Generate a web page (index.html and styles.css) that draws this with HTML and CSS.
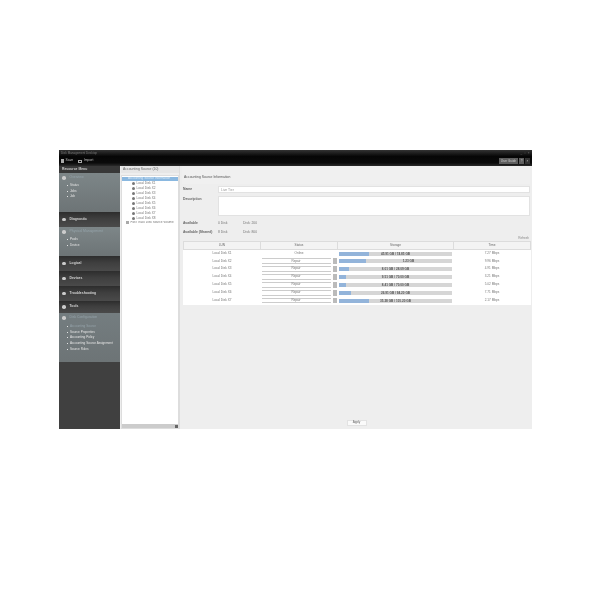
FILE: index.html
```html
<!DOCTYPE html>
<html lang="en">
<head>
<meta charset="utf-8">
<title>Disk Management Desktop</title>
<link rel="stylesheet" href="styles.css">
</head>
<body>
<div class="app">
  <header class="top">
    <div class="titlebar"><span>Disk Management Desktop</span><span class="winctl">_ □ ×</span></div>
    <div class="toolbar">
      <div class="tools"><span class="tool"><i class="ico"></i>Save</span><span class="tool"><i class="ico box"></i>Import</span></div>
      <div class="tools"><span class="tbtn">User Guide</span><span class="tbtn sq">?</span><span class="tbtn sq dark">×</span></div>
    </div>
  </header>
  <div class="body">
    <nav class="side">
      <div class="sidehead">Resource Menu</div>
      <div class="group g1">
        <div class="ghead"><i class="dot"></i><span class="faint">Overview</span></div>
        <ul><li>Status</li><li>Jobs</li><li>Job</li></ul>
      </div>
      <div class="cat"><i class="dot"></i>Diagnostic</div>
      <div class="group g2">
        <div class="ghead"><i class="dot"></i><span class="faint">Physical Management</span></div>
        <ul><li>Pools</li><li>Device</li></ul>
      </div>
      <div class="cat"><i class="dot"></i>Logical</div>
      <div class="cat"><i class="dot"></i>Devices</div>
      <div class="cat"><i class="dot"></i>Troubleshooting</div>
      <div class="cat last"><i class="dot"></i>Tools</div>
      <div class="group g3">
        <div class="ghead"><i class="dot"></i><span class="faint">Disk Configuration</span></div>
        <ul><li class="faint">Accounting Source</li><li>Source Properties</li><li>Accounting Policy</li><li>Accounting Source Assignment</li><li>Source Rules</li></ul>
      </div>
    </nav>
    <aside class="treepane">
      <div class="treehead">Accounting Source (10)</div>
      <div class="treewrap">
        <div class="tree">
          <div class="node sel">Accounting Source Information</div>
          <div class="node leaf"><i></i>Local Disk X1</div>
          <div class="node leaf"><i></i>Local Disk X2</div>
          <div class="node leaf"><i></i>Local Disk X3</div>
          <div class="node leaf"><i></i>Local Disk X4</div>
          <div class="node leaf"><i></i>Local Disk X5</div>
          <div class="node leaf"><i></i>Local Disk X6</div>
          <div class="node leaf"><i></i>Local Disk X7</div>
          <div class="node leaf"><i></i>Local Disk X8</div>
          <div class="node root"><i></i>Fast Track Disk Source Volume</div>
        </div>
        <div class="scroll"><span class="end"></span></div>
      </div>
    </aside>
    <main class="main">
      <h1>Accounting Source Information</h1>
      <div class="form">
        <div class="frow"><label>Name</label><div class="input">Live Tier</div></div>
        <div class="frow"><label>Description</label><div class="input area"></div></div>
      </div>
      <div class="stats">
        <div class="srow"><label>Available</label><span class="v1">0 Disk</span><span>Disk: 200</span></div>
        <div class="srow"><label>Available (Shared)</label><span class="v1">8 Disk</span><span>Disk: 800</span></div>
      </div>
      <div class="refresh">Refresh</div>
      <table>
        <thead><tr><th>LUN</th><th>Status</th><th>Storage</th><th>Time</th></tr></thead>
        <tbody>
          <tr><td>Local Disk X1</td><td>Online</td><td><div class="bar"><b class="w34"></b><span>45.91 GB / 74.85 GB</span></div></td><td>7.27 Mbps</td></tr>
          <tr><td>Local Disk X2</td><td class="pick"><div class="sel-box"><span>Repair</span><i></i></div></td><td><div class="bar"><b class="w28"></b><span class="endtxt">1.23 GB</span></div></td><td>9.96 Mbps</td></tr>
          <tr><td>Local Disk X3</td><td class="pick"><div class="sel-box"><span>Repair</span><i></i></div></td><td><div class="bar"><b class="w10"></b><span>8.01 GB / 28.09 GB</span></div></td><td>4.91 Mbps</td></tr>
          <tr><td>Local Disk X4</td><td class="pick"><div class="sel-box"><span>Repair</span><i></i></div></td><td><div class="bar"><b class="w8"></b><span>9.51 GB / 70.00 GB</span></div></td><td>3.21 Mbps</td></tr>
          <tr><td>Local Disk X5</td><td class="pick"><div class="sel-box"><span>Repair</span><i></i></div></td><td><div class="bar"><b class="w8"></b><span>8.41 GB / 70.00 GB</span></div></td><td>5.02 Mbps</td></tr>
          <tr><td>Local Disk X6</td><td class="pick"><div class="sel-box"><span>Repair</span><i></i></div></td><td><div class="bar"><b class="w12"></b><span>26.91 GB / 94.20 GB</span></div></td><td>7.71 Mbps</td></tr>
          <tr><td>Local Disk X7</td><td class="pick"><div class="sel-box"><span>Repair</span><i></i></div></td><td><div class="bar"><b class="w34"></b><span>35.28 GB / 101.20 GB</span></div></td><td>2.17 Mbps</td></tr>
        </tbody>
      </table>
      <div class="foot"><button type="button">Apply</button></div>
    </main>
  </div>
</div>
</body>
</html>
```
FILE: styles.css
```css
* { box-sizing: border-box; margin: 0; padding: 0; }
html, body { height: 100%; background: #fff; }
body { padding: 150px 68px 0 59px; font-family: "Liberation Sans", Arial, sans-serif; font-size: 3.4px; line-height: 1; color: #555; }
.app { width: 473px; height: 279px; display: flex; flex-direction: column; filter: blur(0.5px); overflow: hidden; }
.top { height: 16px; flex: none; background: linear-gradient(#333, #060606 40%, #0a0a0a 80%, #2a2a2a); color: #aaa; }
.titlebar { height: 6px; display: flex; justify-content: space-between; align-items: center; padding: 0 2px; color: #777; font-size: 3px; }
.winctl { letter-spacing: .5px; }
.toolbar { height: 10px; display: flex; justify-content: space-between; align-items: center; padding: 0 2px; }
.tools { display: flex; gap: 5px; align-items: center; }
.tool { display: flex; align-items: center; gap: 1.5px; color: #bbb; }
.ico { width: 3px; height: 4px; background: #aaa; }
.ico.box { width: 4px; height: 3px; background: none; border: .6px solid #aaa; }
.tools:last-child { gap: 1px; }
.tbtn { background: #5e5e5e; color: #ccc; height: 6px; padding: 0 2px; display: flex; align-items: center; font-size: 3px; }
.tbtn.sq { width: 5px; justify-content: center; padding: 0; }
.tbtn.dark { background: #333; }
.body { flex: 1; display: flex; min-height: 0; background: #eee; }
.side { width: 61px; flex: none; background: #404040; color: #ccc; display: flex; flex-direction: column; }
.sidehead { height: 7px; padding: 0 3px; display: flex; align-items: center; background: #383838; font-weight: bold; }
.group { background: linear-gradient(#7d8688, #6d7476); color: #e4e4e4; }
.g1 { height: 39px; }
.g2 { height: 29px; }
.g3 { height: 49px; background: linear-gradient(#747d80, #6d7476); }
.ghead { height: 10px; display: flex; align-items: center; gap: 4px; padding-left: 3px; }
.faint { color: #95a3aa; }
.group ul { list-style: none; padding: 1px 0 0 11px; display: flex; flex-direction: column; gap: 2.6px; }
.group li { position: relative; font-size: 3.1px; }
.group li::before { content: ""; position: absolute; left: -3px; top: 1px; width: 1px; height: 1px; background: #e4e4e4; }
.g3 ul { padding-top: 2px; }
.g3 li { white-space: nowrap; }
.cat { height: 15px; display: flex; align-items: center; gap: 4px; padding-left: 3px; background: linear-gradient(#2d2d2d, #3f3f3f 45%, #4a4a4a); color: #d4d4d4; font-weight: bold; }
.cat.last { height: 12px; }
.dot { width: 3.5px; height: 3.5px; border-radius: 50%; background: #ccc; flex: none; }
.treepane { width: 59px; flex: none; margin-left: 1px; display: flex; flex-direction: column; background: #eee; border-right: 1px solid #ddd; }
.treehead { height: 7px; padding-left: 2px; display: flex; align-items: center; background: #e6e6e6; color: #666; }
.treewrap { flex: 1; margin-top: 2px; background: #fff; border: .5px solid #ddd; display: flex; flex-direction: column; min-height: 0; }
.tree { flex: 1; padding-top: .5px; }
.node { height: 4.9px; display: flex; align-items: center; gap: 1.5px; white-space: nowrap; overflow: hidden; color: #777; font-size: 3.1px; }
.node.sel { background: #8ab8e0; color: #dbe9f5; padding-left: 6px; }
.node.leaf { padding-left: 10px; }
.node.leaf i { width: 3px; height: 3px; border-radius: 50%; background: #777; flex: none; }
.node.root { padding-left: 4px; }
.node.root i { width: 3px; height: 3px; background: #aaa; flex: none; }
.scroll { height: 4px; background: #ccc; display: flex; justify-content: flex-end; align-items: center; padding-right: .5px; }
.end { width: 3px; height: 3px; background: #666; }
.main { flex: 1; min-width: 0; padding: 0 2px 3px 3px; display: flex; flex-direction: column; background: #eee; }
h1 { font-size: 3.4px; font-weight: normal; color: #555; padding: 10px 0 3px 2px; height: 18px; display: flex; align-items: flex-start; margin-left: -1px; background: #f0f0f0; }
.form { display: flex; flex-direction: column; gap: 3px; margin-top: 2px; }
.frow { display: flex; }
.frow label { width: 35px; flex: none; font-weight: bold; padding-top: 2px; color: #666; }
.input { flex: 1; height: 7px; background: #fff; border: .5px solid #e2e2e2; padding: 1.5px 2px; color: #999; }
.input.area { height: 20px; }
.stats { display: flex; flex-direction: column; gap: 5.5px; margin-top: 6px; }
.srow { display: flex; color: #777; }
.srow label { width: 35px; flex: none; font-weight: bold; color: #666; }
.srow .v1 { width: 25px; flex: none; }
.refresh { text-align: right; color: #888; font-size: 3.1px; margin-top: 3px; padding-right: 1px; height: 4px; }
table { width: 347px; border-collapse: collapse; table-layout: fixed; background: #fff; font-size: 3.1px; color: #777; }
thead th { height: 7.5px; background: #f3f3f3; border: .5px solid #dcdcdc; font-weight: normal; color: #666; }
th:nth-child(1) { width: 77px; }
th:nth-child(2) { width: 77px; }
th:nth-child(3) { width: 116px; }
th:nth-child(4) { width: 77px; }
td { height: 7.9px; text-align: center; padding: 0; }
td.pick { padding: 0 0 0 1px; }
.sel-box { display: flex; align-items: stretch; height: 5.6px; }
.sel-box span { flex: 1; border-top: .5px solid #ccc; border-bottom: .5px solid #ccc; display: flex; align-items: center; justify-content: center; margin-right: 2px; }
.sel-box i { width: 4.5px; background: #bbb; margin-right: .5px; }
.bar { position: relative; height: 4px; margin: 0 1.5px; background: #d6d6d6; text-align: center; line-height: 4px; color: #555; font-weight: bold; }
.bar b { position: absolute; left: 0; top: 0; bottom: 0; background: #93b4da; }
.bar span { position: relative; }
.bar .endtxt { margin-left: 26px; }
.w34 { width: 30px; }
.w28 { width: 27px; }
.w10 { width: 10px; }
.w8 { width: 7px; }
.w12 { width: 12px; }
.foot { flex: 1; display: flex; justify-content: center; align-items: flex-end; }
button { width: 20px; height: 6px; background: #fafafa; border: .5px solid #e2e2e2; font: inherit; color: #666; font-size: 3.1px; }
```
